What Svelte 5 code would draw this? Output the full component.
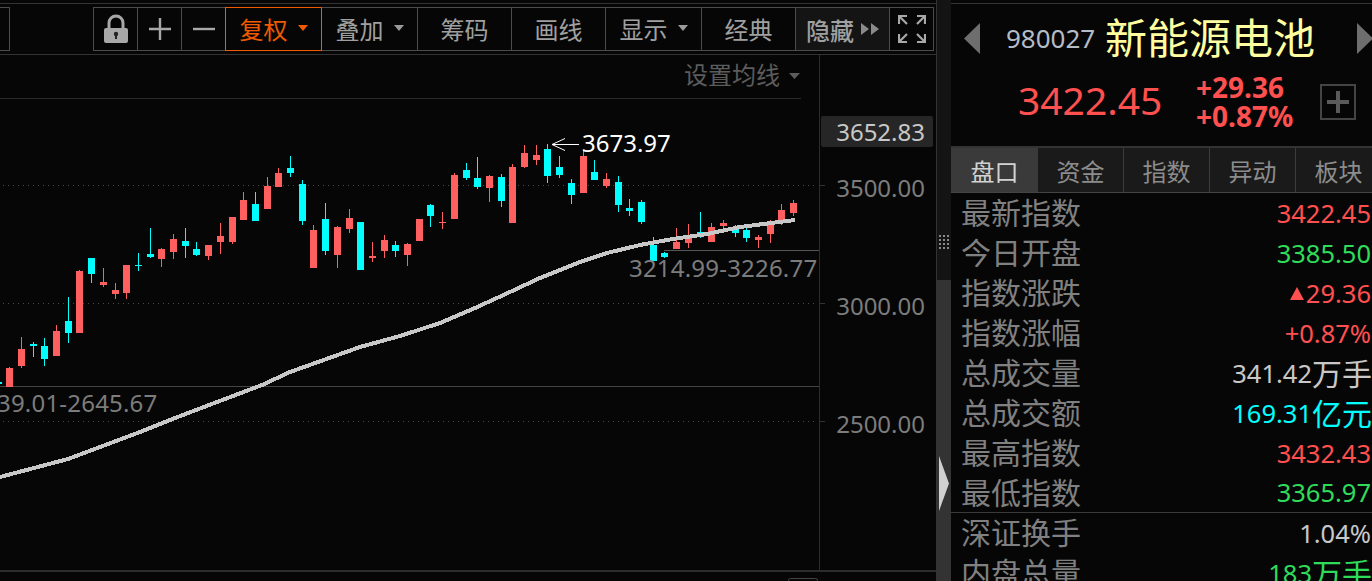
<script>
	const RED = '#ff5f5f';
	const CYAN = '#00ffff';

	// left edge, body top, body bottom, high, low, rising
	const candles = [
		[-5, 382, 384, 381, 385, 0], [6, 368, 387, 367, 387, 1], [18, 349, 366, 337, 368, 1], [30, 344, 346, 342, 357, 0],
		[41, 346, 359, 338, 366, 0], [53, 331, 356, 325, 356, 1], [65, 321, 333, 297, 343, 0], [76, 271, 333, 270, 333, 1],
		[88, 258, 274, 258, 283, 0], [100, 282, 285, 268, 287, 1], [112, 290, 294, 283, 299, 1], [123, 265, 293, 265, 299, 1],
		[135, 265, 266, 253, 271, 0], [147, 254, 257, 228, 258, 0], [158, 249, 259, 248, 267, 1], [170, 239, 252, 234, 259, 1],
		[182, 241, 246, 228, 258, 0], [193, 249, 255, 242, 256, 0], [205, 245, 256, 245, 260, 1], [217, 236, 242, 223, 254, 1],
		[229, 217, 242, 217, 244, 1], [240, 200, 220, 192, 220, 1], [252, 204, 221, 192, 221, 0], [264, 186, 209, 177, 209, 1],
		[275, 173, 187, 168, 187, 1], [287, 168, 173, 156, 177, 0], [299, 184, 221, 180, 225, 0], [310, 230, 268, 225, 268, 1],
		[322, 219, 251, 203, 255, 0], [334, 227, 255, 226, 268, 1], [346, 218, 229, 209, 233, 1], [357, 222, 270, 222, 270, 0],
		[369, 256, 258, 242, 262, 1], [381, 240, 251, 235, 258, 1], [392, 245, 251, 241, 257, 0], [404, 244, 255, 243, 266, 1],
		[416, 219, 241, 219, 241, 1], [427, 205, 216, 204, 227, 0], [439, 222, 223, 212, 229, 1], [451, 175, 219, 173, 219, 1],
		[463, 170, 178, 163, 180, 0], [474, 178, 187, 157, 189, 0], [486, 176, 188, 175, 202, 1], [498, 177, 201, 174, 207, 0],
		[509, 167, 223, 164, 223, 1], [521, 153, 167, 145, 168, 1], [533, 155, 160, 145, 165, 1], [544, 149, 176, 144, 183, 0],
		[556, 167, 175, 156, 178, 0], [568, 183, 195, 179, 204, 0], [580, 156, 193, 150, 193, 1], [591, 172, 180, 160, 180, 0],
		[603, 179, 186, 173, 188, 1], [615, 182, 205, 176, 212, 0], [626, 208, 211, 199, 216, 0], [638, 202, 222, 200, 224, 0],
		[650, 245, 261, 237, 261, 0], [661, 253, 257, 252, 258, 0], [673, 242, 249, 228, 249, 1], [685, 238, 243, 224, 248, 1],
		[697, 232, 236, 212, 238, 0], [708, 227, 242, 223, 242, 1], [720, 223, 226, 220, 233, 1], [732, 229, 233, 225, 237, 0],
		[743, 230, 238, 225, 242, 0], [755, 237, 240, 235, 248, 1], [767, 225, 234, 220, 243, 1], [778, 210, 220, 204, 225, 1],
		[790, 203, 213, 200, 216, 1]
	];

	const maLine = '0,477 68,459 100,447 140,432 175,418 225,399 262,385 290,372 360,347 400,336 440,323 475,308 510,292 540,278 580,262 607,253 640,245 673,239 707,234 740,227 795,220';

	const gridLines = [185, 303, 421];
	const axisLabels = [
		{ y: 197, text: '3500.00' },
		{ y: 315, text: '3000.00' },
		{ y: 433, text: '2500.00' }
	];

	const tools = [
		{ label: '复权', width: 97, caret: true, active: true },
		{ label: '叠加', width: 97, caret: true },
		{ label: '筹码', width: 95 },
		{ label: '画线', width: 95 },
		{ label: '显示', width: 97, caret: true },
		{ label: '经典', width: 95 }
	];

	const tabs = ['盘口', '资金', '指数', '异动', '板块'];

	const rows = [
		{ label: '最新指数', value: '3422.45', tone: 'red' },
		{ label: '今日开盘', value: '3385.50', tone: 'green' },
		{ label: '指数涨跌', value: '29.36', tone: 'red', rise: true },
		{ label: '指数涨幅', value: '+0.87%', tone: 'red' },
		{ label: '总成交量', value: '341.42', unit: '万手', tone: 'plain' },
		{ label: '总成交额', value: '169.31', unit: '亿元', tone: 'cyan' },
		{ label: '最高指数', value: '3432.43', tone: 'red' },
		{ label: '最低指数', value: '3365.97', tone: 'green', divider: true },
		{ label: '深证换手', value: '1.04%', tone: 'plain' },
		{ label: '内盘总量', value: '183', unit: '万手', tone: 'green' }
	];

	const gripDots = Array.from({ length: 12 });
</script>

<div class="terminal">
	<section class="left">
		<div class="toolbar">
			<div class="cell stub"></div>
			<div class="spacer"></div>
			<div class="cell icon-cell">
				<svg width="26" height="30" viewBox="0 0 26 30">
					<path d="M6 15V9a7 7 0 0 1 14 0v6" fill="none" stroke="#a8a8a8" stroke-width="3" />
					<rect x="1" y="14" width="24" height="15" rx="2" fill="#a8a8a8" />
					<circle cx="13" cy="20" r="2.2" fill="#222" />
					<rect x="12" y="20" width="2" height="5" fill="#222" />
				</svg>
			</div>
			<div class="cell icon-cell">
				<svg width="24" height="24" viewBox="0 0 24 24"><path d="M1 12h22M12 1v22" stroke="#a8a8a8" stroke-width="2.4" /></svg>
			</div>
			<div class="cell icon-cell">
				<svg width="24" height="24" viewBox="0 0 24 24"><path d="M1 12h22" stroke="#a8a8a8" stroke-width="2.4" /></svg>
			</div>
			{#each tools as tool}
				<div class="cell tool" class:active={tool.active} style:width="{tool.width}px">
					<span>{tool.label}</span>
					{#if tool.caret}<i class="caret"></i>{/if}
				</div>
			{/each}
			<div class="cell hide-cell">
				<span>隐藏</span>
				<svg width="18" height="12" viewBox="0 0 18 12"><path d="M0 0l8 6-8 6zM10 0l8 6-8 6z" fill="#8a8a8a" /></svg>
			</div>
			<div class="cell icon-cell">
				<svg width="28" height="28" viewBox="0 0 28 28" fill="none" stroke="#a8a8a8" stroke-width="2.2">
					<path d="M1 9V1h8M1 1l8 8M27 9V1h-8M27 1l-8 8M1 19v8h8M1 27l8-8M27 19v8h-8M27 27l-8-8" />
				</svg>
			</div>
		</div>

		<svg class="chart" width="936" height="526" viewBox="0 55 936 526">
			<rect x="0" y="98" width="801" height="1" fill="#2a2a2a" />
			<text class="ma-setting" x="684" y="84">设置均线</text>
			<path d="M789 73h11l-5.500 6z" fill="#5c5c5c" />

			{#each gridLines as y}
				<line x1="3" x2="818" y1={y + 0.5} y2={y + 0.5} stroke="#4a4a4a" stroke-dasharray="1 4" />
				<rect x="819" y={y} width="6" height="1" fill="#333" />
			{/each}

			<rect x="0" y="386" width="819" height="1" fill="#444" />
			<rect x="664" y="250" width="155" height="1" fill="#555" />
			<rect x="819" y="55" width="1" height="516" fill="#2c2c2c" />
			<rect x="0" y="570" width="936" height="2" fill="#2c2c2c" />
			<rect x="788.500" y="578.500" width="29" height="8" rx="2" fill="none" stroke="#444" />

			{#each candles as [x, top, bottom, high, low, up]}
				<rect x={x + 3} y={high} width="1" height={low - high} fill={up ? RED : CYAN} />
				<rect x={x} y={top} width="7" height={bottom - top} fill={up ? RED : CYAN} />
			{/each}

			<polyline class="ma" points={maLine} fill="none" stroke="#c8c8c8" stroke-width="4" />

			<path d="M579 144.500H552M565 138.500l-13 6 13 6" fill="none" stroke="#fff" />
			<text class="peak" x="582" y="152">3673.97</text>
			<text class="range" x="629" y="277">3214.99-3226.77</text>
			<text class="range" x="-3" y="412">39.01-2645.67</text>

			<rect x="821" y="116" width="112" height="31" rx="2" fill="#262626" />
			<text class="axis current" x="925" y="141">3652.83</text>
			{#each axisLabels as label}
				<text class="axis" x="925" y={label.y}>{label.text}</text>
			{/each}
		</svg>
	</section>

	<div class="splitter">
		<div class="split-top">
			<div class="grip">
				{#each gripDots as _}<i></i>{/each}
			</div>
		</div>
		<div class="split-bottom">
			<svg width="10" height="55" viewBox="0 0 10 55"><path d="M0 0l10 27.500L0 55z" fill="#cfcfcf" /></svg>
		</div>
	</div>

	<aside class="panel">
		<div class="head">
			<div class="title-row">
				<svg class="nav" width="16" height="31" viewBox="0 0 16 31"><path d="M16 0v31L0 15.500z" fill="#6e6e6e" /></svg>
				<span class="code">980027</span>
				<span class="name">新能源电池</span>
				<svg class="nav next" width="16" height="31" viewBox="0 0 16 31"><path d="M0 0v31l16-15.500z" fill="#6e6e6e" /></svg>
			</div>
			<div class="price-row">
				<span class="price">3422.45</span>
				<div class="change">
					<span>+29.36</span>
					<span>+0.87%</span>
				</div>
				<div class="add">
					<svg width="22" height="22" viewBox="0 0 22 22"><path d="M0 11h22M11 0v22" stroke="#5a5a5a" stroke-width="4" /></svg>
				</div>
			</div>
		</div>

		<div class="tabs">
			{#each tabs as tab, i}
				<div class="tab" class:current={i === 0}>{tab}</div>
			{/each}
		</div>

		<div class="rows">
			{#each rows as row}
				<div class="row" class:divider={row.divider}>
					<span class="label">{row.label}</span>
					<span class="value {row.tone}">
						{#if row.rise}<i class="rise"></i>{/if}{row.value}{#if row.unit}<em>{row.unit}</em>{/if}
					</span>
				</div>
			{/each}
		</div>
	</aside>
</div>

<style>
	:global(body) {
		background: #060606;
		overflow: hidden;
	}

	.terminal {
		display: flex;
		width: 1372px;
		height: 581px;
		overflow: hidden;
		background: #060606;
		font-family: "Noto Sans", "Noto Sans CJK SC", sans-serif;
		box-sizing: border-box;
		padding-top: 3px;
	}

	.left {
		width: 936px;
		flex: none;
		display: flex;
		flex-direction: column;
		border-top: 1px solid #333;
	}

	.toolbar {
		display: flex;
		height: 51px;
		padding-top: 3px;
		box-sizing: border-box;
		border-bottom: 1px solid #333;
	}

	.cell {
		height: 44px;
		box-sizing: border-box;
		border: 1px solid #4c4c4c;
		margin-left: -1px;
		display: flex;
		align-items: center;
		justify-content: center;
		flex: none;
	}

	.stub {
		width: 10px;
		margin-left: 0;
		border-left: none;
	}

	.spacer {
		width: 84px;
		flex: none;
	}

	.icon-cell {
		width: 45px;
	}

	.tool {
		gap: 10px;
		color: #a0a0a0;
		font-size: 24px;
		line-height: 1;
		padding-top: 1px;
	}

	.tool.active {
		position: relative;
		border-color: #f05a00;
		color: #f05a00;
	}

	.caret {
		width: 0;
		height: 0;
		border-left: 5px solid transparent;
		border-right: 5px solid transparent;
		border-top: 6px solid #9a9a9a;
		margin-top: -4px;
	}

	.active .caret {
		border-top-color: #f05a00;
	}

	.hide-cell {
		width: 95px;
		gap: 7px;
		color: #a0a0a0;
		font-size: 24px;
		background: #141414;
		font-weight: 500;
	}

	.chart {
		display: block;
		flex: none;
	}

	.chart text {
		font-family: "Noto Sans", "Noto Sans CJK SC", sans-serif;
	}

	.ma {
		shape-rendering: crispEdges;
	}

	.ma-setting {
		font-size: 24px;
		fill: #5c5c5c;
	}

	.peak {
		font-size: 24px;
		fill: #fff;
	}

	.range {
		font-size: 24px;
		fill: #7c7c7c;
		letter-spacing: 0.2px;
	}

	.axis {
		font-size: 24px;
		fill: #7c7c7c;
		text-anchor: end;
	}

	.axis.current {
		fill: #c8c8c8;
	}

	.splitter {
		width: 15px;
		flex: none;
		display: flex;
		flex-direction: column;
		margin-top: -3px;
		border-left: 1px solid #333;
		box-sizing: border-box;
	}

	.split-top {
		height: 280px;
		background: #141414;
		box-sizing: border-box;
		padding: 235px 0 0 2px;
	}

	.grip {
		display: grid;
		grid-template-columns: repeat(3, 2px);
		grid-auto-rows: 2px;
		gap: 2px;
	}

	.grip i {
		background: #8a8a8a;
	}

	.split-bottom {
		flex: 1;
		background: #333;
		padding: 176px 0 0 2px;
	}

	.split-bottom svg {
		display: block;
	}

	.panel {
		flex: 1;
		min-width: 0;
		border-top: 1px solid #333;
		display: flex;
		flex-direction: column;
	}

	.head {
		height: 142px;
		flex: none;
	}

	.title-row {
		display: flex;
		align-items: center;
		height: 68px;
		padding-left: 13px;
	}

	.nav.next {
		margin-left: 42px;
		flex: none;
	}

	.nav {
		flex: none;
	}

	.code {
		margin-left: 26px;
		font-size: 26px;
		color: #b4bcc8;
		width: 99px;
		flex: none;
	}

	.name {
		font-size: 42px;
		line-height: 1;
		color: #ffffa0;
		flex: none;
	}

	.price-row {
		display: flex;
		align-items: center;
		height: 60px;
		padding-left: 67px;
	}

	.price {
		font-size: 39px;
		line-height: 1;
		color: #ff5050;
		width: 178px;
		flex: none;
		margin-bottom: 6px;
	}

	.change {
		display: flex;
		flex-direction: column;
		font-size: 28px;
		font-weight: 700;
		line-height: 29px;
		color: #ff5050;
		width: 124px;
		flex: none;
	}

	.add {
		width: 36px;
		height: 36px;
		flex: none;
		box-sizing: border-box;
		border: 2px solid #444;
		display: flex;
		align-items: center;
		justify-content: center;
	}

	.tabs {
		display: flex;
		height: 47px;
		flex: none;
		box-sizing: border-box;
		border-top: 2px solid #333;
		border-bottom: 1px solid #444;
		background: #1a1a1a;
	}

	.tab {
		width: 86px;
		flex: none;
		display: flex;
		align-items: center;
		justify-content: center;
		font-size: 24px;
		color: #8c8c8c;
		border-right: 1px solid #3c3c3c;
		box-sizing: border-box;
	}

	.tab.current {
		width: 87px;
		background: #3a3a3a;
		color: #d2d2d2;
		border-right: none;
	}

	.rows {
		flex: 1;
		min-height: 0;
	}

	.row {
		display: flex;
		align-items: center;
		justify-content: space-between;
		height: 40px;
		padding-left: 10px;
		box-sizing: border-box;
	}

	.row.divider {
		border-bottom: 1px solid #3a3a3a;
	}

	.label {
		font-size: 30px;
		line-height: 1;
		color: #808080;
	}

	.value {
		font-size: 25.500px;
		line-height: 1;
		display: flex;
		align-items: center;
		margin-right: 1px;
		padding-top: 1px;
	}

	.value em {
		font-style: normal;
		font-size: 30px;
		margin-right: -1px;
	}

	.red { color: #ff5050; }
	.green { color: #2fdc5a; }
	.cyan { color: #00ffff; }
	.plain { color: #c8c8c8; }

	.rise {
		width: 0;
		height: 0;
		border-left: 7px solid transparent;
		border-right: 7px solid transparent;
		border-bottom: 13px solid #ff5050;
		margin-right: 2px;
	}
</style>
